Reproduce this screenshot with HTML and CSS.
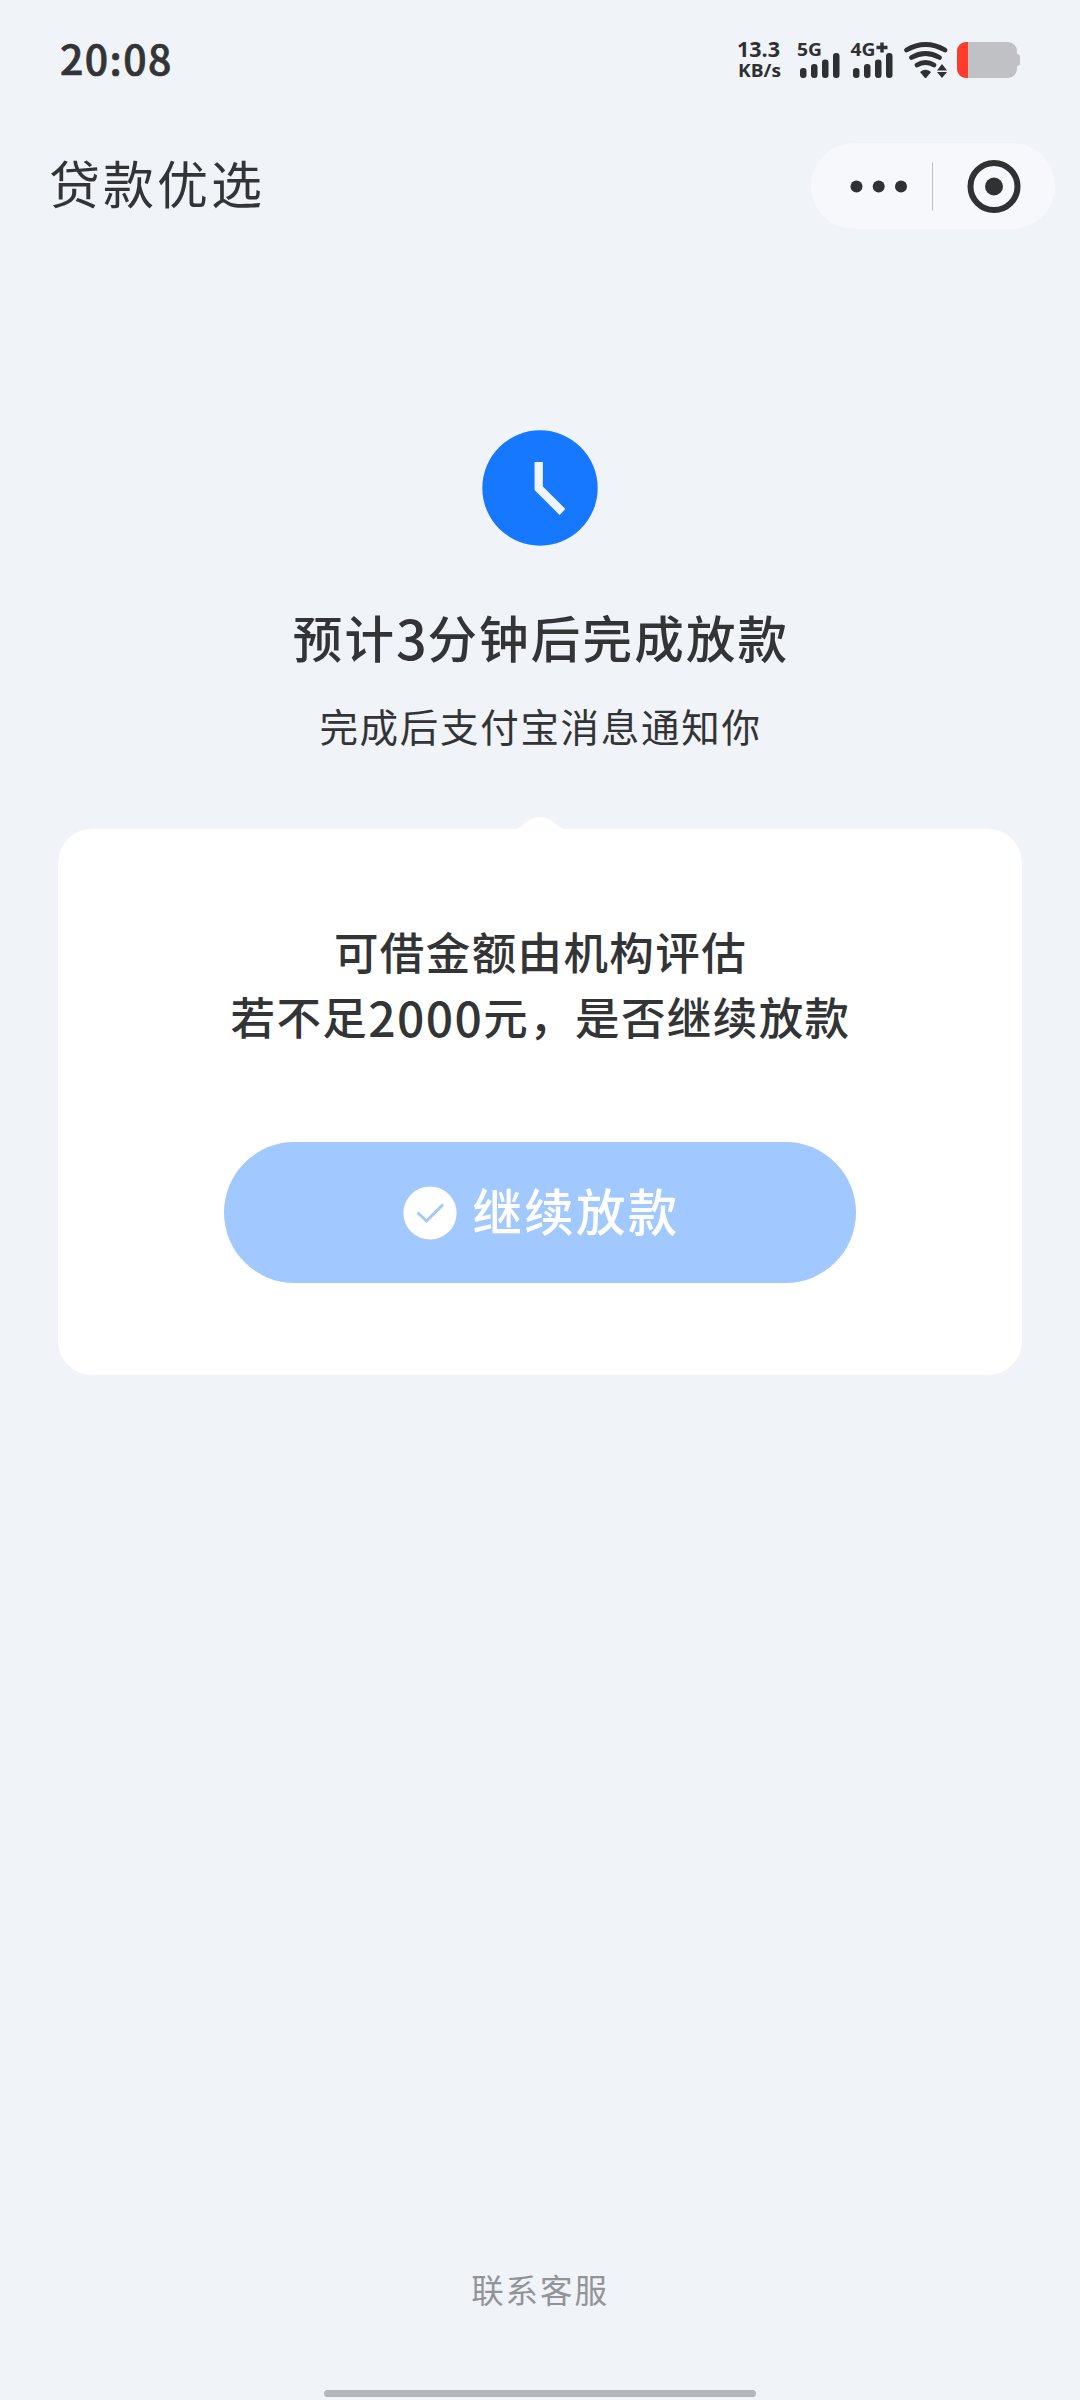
FILE: index.html
```html
<!DOCTYPE html>
<html lang="zh-CN">
<head>
<meta charset="utf-8">
<title>贷款优选</title>
<link rel="stylesheet" href="styles.css">
</head>
<body>
<div class="screen">
  <header class="status">
    <span class="time">20:08</span>
    <svg class="status-icons" viewBox="0 0 320 80" width="320" height="80">
      <g class="status-text">
        <text x="17" y="37" font-size="21" textLength="43" lengthAdjust="spacingAndGlyphs">13.3</text>
        <text x="18" y="57" font-size="18.5" textLength="43" lengthAdjust="spacingAndGlyphs">KB/s</text>
        <text x="77" y="35.5" font-size="18.5" textLength="25" lengthAdjust="spacingAndGlyphs">5G</text>
        <text x="130.500" y="35.500" font-size="18.500" textLength="25" lengthAdjust="spacingAndGlyphs">4G</text>
      </g>
      <path d="M162 22.500v10M156.500 27.500h11" stroke="#2f3032" stroke-width="3.400"/>
      <g fill="#2f3032">
        <rect x="80" y="48" width="6.500" height="10" rx="3"/>
        <rect x="91" y="44" width="6.500" height="14" rx="3"/>
        <rect x="102" y="39.500" width="6.500" height="18.500" rx="3"/>
        <rect x="113" y="33" width="6.500" height="25" rx="3"/>
        <rect x="133" y="48" width="6.500" height="10" rx="3"/>
        <rect x="144" y="44" width="6.500" height="14" rx="3"/>
        <rect x="155" y="39.500" width="6.500" height="18.500" rx="3"/>
        <rect x="166" y="33" width="6.500" height="25" rx="3"/>
        <path d="M200 52Q205.500 47.500 211 52L206.500 57.500Q205.500 58.500 204.500 57.500Z"/>
        <path d="M217 50.500L222 44L227 50.500ZM217 52L222 58L227 52Z"/>
      </g>
      <g fill="none" stroke="#2f3032" stroke-width="4.800" stroke-linecap="round">
        <path d="M186.500 30Q205.500 19 225 30"/>
        <path d="M191.500 37.500Q205.500 29.500 219.500 37.500"/>
        <path d="M197 45Q205.500 40 214 45"/>
      </g>
      <rect x="237" y="22" width="60" height="36" rx="9" fill="#c0c1c5"/>
      <path d="M248 22v36h-2a9 9 0 0 1-9-9V31a9 9 0 0 1 9-9z" fill="#ff3b2b"/>
      <path d="M297 34a3 3 0 0 1 3 3v6a3 3 0 0 1-3 3z" fill="#c0c1c5"/>
    </svg>
  </header>

  <nav class="nav">
    <h1 class="nav-title">贷款优选</h1>
    <div class="capsule">
      <svg viewBox="0 0 244 86" width="244" height="86">
        <g fill="#303133">
          <circle cx="45.500" cy="43.500" r="6"/>
          <circle cx="67.700" cy="43.500" r="6"/>
          <circle cx="90" cy="43.500" r="6"/>
          <circle cx="183" cy="43.500" r="9"/>
        </g>
        <path d="M121.500 19.500v48" stroke="#bfc1c5" stroke-width="1"/>
        <circle cx="183" cy="43.500" r="23.500" fill="none" stroke="#303133" stroke-width="6"/>
      </svg>
    </div>
  </nav>

  <main class="content">
    <svg class="clock" viewBox="0 0 116 116" width="116" height="116">
      <circle cx="58" cy="58" r="57.700" fill="#1677ff"/>
      <path d="M56.700 32v26.300L80.500 82" fill="none" stroke="#f0f5fc" stroke-width="8.300"/>
    </svg>
    <h2 class="headline">预计<span class="digit">3</span>分钟后完成放款</h2>
    <p class="sub">完成后支付宝消息通知你</p>

    <section class="card">
      <svg class="notch" viewBox="0 0 52 14" width="52" height="14"><path d="M0 13C9 13 13 1 26 1S43 13 52 13V14H0Z" fill="#fff"/></svg>
      <p class="card-text">可借金额由机构评估<br>若不足<span class="digits">2000</span>元，是否继续放款</p>
      <button class="confirm" type="button">
        <svg viewBox="0 0 54 54" width="54" height="54">
          <circle cx="27" cy="27" r="26.600" fill="#fff"/>
          <path d="M14.500 26.500L23.500 35L40 18.500" fill="none" stroke="#a1c8ff" stroke-width="3"/>
        </svg>
        <span class="confirm-label">继续放款</span>
      </button>
    </section>
  </main>

  <footer class="footer">
    <a class="service">联系客服</a>
    <div class="home-bar"></div>
  </footer>
</div>
</body>
</html>
```
FILE: styles.css
```css
* { box-sizing: border-box; margin: 0; padding: 0; }

body {
  background: #f0f3f8;
  color: #333436;
  font-family: "Noto Sans CJK SC", sans-serif;
}

svg { display: block; flex: none; }

.screen {
  width: 1080px;
  height: 2400px;
  display: flex;
  flex-direction: column;
}

.status {
  height: 120px;
  padding: 20px 40px 20px 60px;
  display: flex;
  justify-content: space-between;
}

.time {
  font-size: 41px;
  font-weight: 500;
  line-height: 75px;
  letter-spacing: 1.4px;
  -webkit-text-stroke: 0.7px #333436;
}

.status-text {
  font-family: "Open Sans", sans-serif;
  font-weight: 700;
  fill: #2f3032;
}

.nav {
  height: 131px;
  padding: 0 25px 0 49px;
  display: flex;
  align-items: center;
  justify-content: space-between;
}

.nav-title {
  padding-bottom: 7px;
  font-size: 51px;
  font-weight: 400;
  line-height: 70px;
  letter-spacing: 3px;
}

.capsule {
  width: 244px;
  height: 86px;
  border-radius: 43px;
  background: #f7f8fb;
}

.content {
  padding: 179px 58px 0;
  display: flex;
  flex-direction: column;
  align-items: center;
}

.headline {
  margin-top: 55px;
  font-size: 49.5px;
  font-weight: 500;
  line-height: 72px;
  letter-spacing: 2.2px;
  padding-left: 2px;
}

.digit {
  font-size: 54px;
  line-height: 1;
  letter-spacing: 0.5px;
  vertical-align: -1.5px;
}

.sub {
  margin-top: 24px;
  font-size: 38.5px;
  line-height: 56px;
  letter-spacing: 1.7px;
  padding-left: 1px;
}

.card {
  position: relative;
  width: 964px;
  height: 546px;
  margin-top: 76px;
  padding-top: 89px;
  border-radius: 34px;
  background: #fff;
  display: flex;
  flex-direction: column;
  align-items: center;
}

.notch {
  position: absolute;
  top: -13px;
  left: 456px;
}

.card-text {
  padding-left: 1px;
  font-size: 44.5px;
  font-weight: 500;
  line-height: 65px;
  letter-spacing: 1.4px;
  text-align: center;
}

.digits {
  font-size: 48px;
  line-height: 1;
  letter-spacing: 1.4px;
  vertical-align: -1.5px;
}

.confirm {
  width: 632px;
  height: 141px;
  margin-top: 94px;
  padding-left: 3px;
  border: 0;
  border-radius: 71px;
  background: #a1c8ff;
  color: #fff;
  font: 500 49.5px/72px "Noto Sans CJK SC", sans-serif;
  letter-spacing: 2.3px;
  display: flex;
  align-items: center;
  justify-content: center;
  gap: 15px;
}

.confirm-label { padding-bottom: 5px; }

.footer {
  margin-top: auto;
  padding-bottom: 3px;
  display: flex;
  flex-direction: column;
  align-items: center;
}

.service {
  font-size: 32.5px;
  line-height: 48px;
  letter-spacing: 1.9px;
  color: #929498;
}

.home-bar {
  width: 432px;
  height: 7px;
  margin-top: 77px;
  border-radius: 4px;
  background: #b3b7bc;
}
```
